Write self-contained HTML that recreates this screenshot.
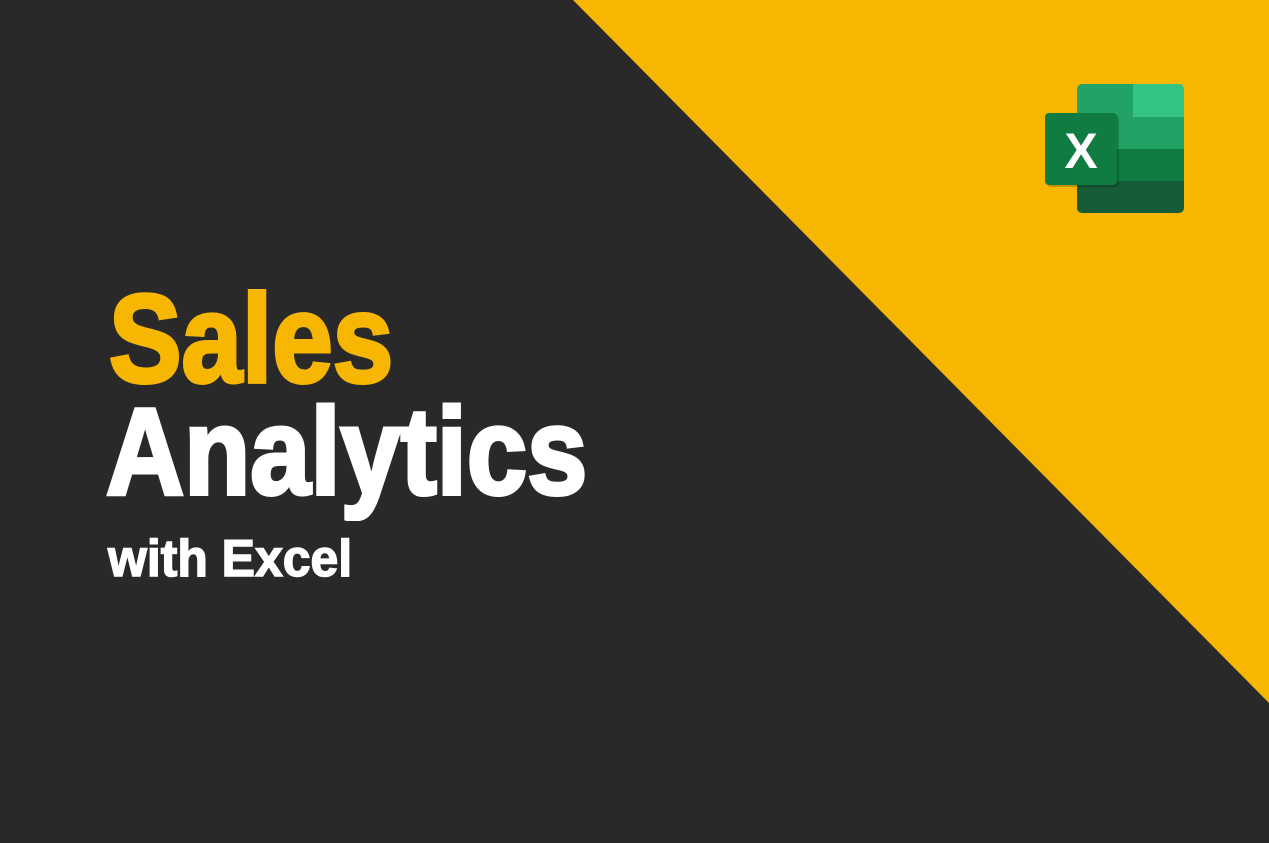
<!DOCTYPE html>
<html><head><style>
html,body{margin:0;padding:0}
body{width:1269px;height:843px;background:#292929;position:relative;overflow:hidden;font-family:"Liberation Sans",sans-serif;font-weight:bold}
.t{position:absolute;line-height:1;white-space:nowrap;transform-origin:0 0}
</style></head><body>
<svg width="1269" height="843" style="position:absolute;left:0;top:0">
<polygon points="573,0 1269,0 1269,703" fill="#f6b602"/>
<clipPath id="c"><rect x="1077" y="84" width="107" height="129" rx="5"/></clipPath>
<g clip-path="url(#c)">
<rect x="1077" y="84" width="56" height="65" fill="#21a366"/>
<rect x="1133" y="84" width="51" height="33" fill="#33c481"/>
<rect x="1133" y="117" width="51" height="32" fill="#21a366"/>
<rect x="1077" y="149" width="107" height="32" fill="#107c41"/>
<rect x="1077" y="181" width="107" height="32" fill="#185c37"/>
</g>
<rect x="1047" y="115" width="72" height="72" rx="4" fill="#000" opacity="0.2"/>
<rect x="1045" y="113" width="72" height="72" rx="4" fill="#107c41"/>
<text x="1081" y="168" font-family="Liberation Sans" font-weight="bold" font-size="50" fill="#fff" text-anchor="middle">X</text>
</svg>
<div class="t" style="left:109px;top:277px;font-size:125px;color:#f6b602;-webkit-text-stroke:4px #f6b602;transform:scaleX(0.87)">Sales</div>
<div class="t" style="left:106px;top:391px;font-size:123px;color:#fff;-webkit-text-stroke:4px #fff;transform:scaleX(0.88)">Analytics</div>
<div class="t" style="left:108px;top:533px;font-size:52px;color:#fff;-webkit-text-stroke:1.5px #fff;transform:scaleX(0.96)">with Excel</div>
</body></html>
